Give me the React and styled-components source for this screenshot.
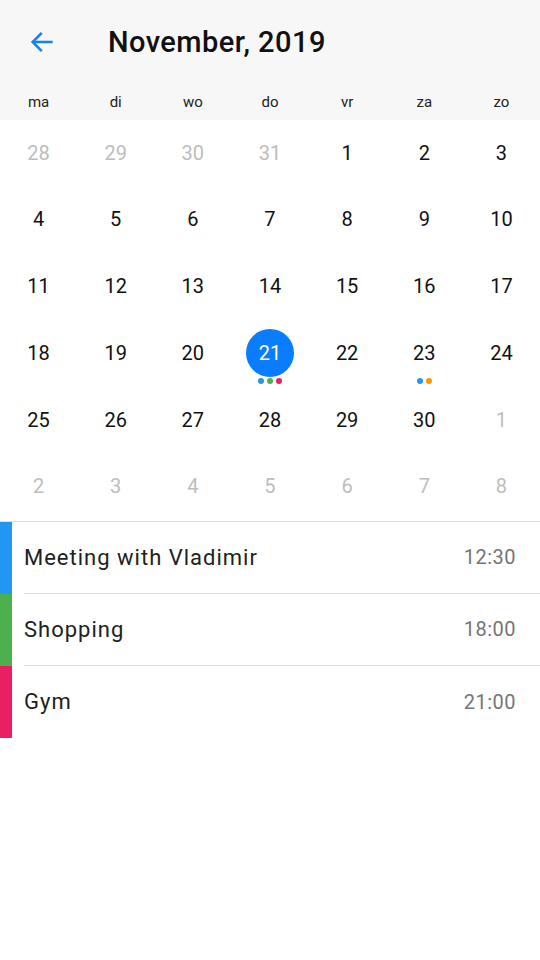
import React from "react";
import styled, { createGlobalStyle } from "styled-components";

const GlobalStyle = createGlobalStyle`
  body {
    margin: 0;
    font-family: Roboto, "Noto Sans", sans-serif;
    background: #fff;
  }
`;

const weekDays = ["ma", "di", "wo", "do", "vr", "za", "zo"];

const days = [
  [28, true], [29, true], [30, true], [31, true], [1], [2], [3],
  [4], [5], [6], [7], [8], [9], [10],
  [11], [12], [13], [14], [15], [16], [17],
  [18], [19], [20], [21], [22], [23], [24],
  [25], [26], [27], [28], [29], [30], [1, true],
  [2, true], [3, true], [4, true], [5, true], [6, true], [7, true], [8, true],
];

const marks = {
  24: ["#2196F3", "#4CAF50", "#E91E63"],
  26: ["#2196F3", "#FF9800"],
};

const events = [
  { title: "Meeting with Vladimir", time: "12:30", color: "#2196F3" },
  { title: "Shopping", time: "18:00", color: "#4CAF50" },
  { title: "Gym", time: "21:00", color: "#E91E63" },
];

export default function App() {
  return (
    <>
      <GlobalStyle />
      <Page>
        <Header>
          <TopBar>
            <BackButton>
              <svg width="28" height="28" viewBox="0 0 24 24" fill="none" stroke="#1a7ff2" strokeWidth="2.2" strokeLinecap="square">
                <path d="M20 12H5" />
                <path d="M11 5l-7 7 7 7" />
              </svg>
            </BackButton>
            <Title>November, 2019</Title>
          </TopBar>
          <WeekRow>
            {weekDays.map((d) => (
              <WeekDay key={d}>{d}</WeekDay>
            ))}
          </WeekRow>
        </Header>
        <Grid>
          {days.map(([n, muted], i) => (
            <Cell key={i}>
              <Day $muted={muted} $selected={i === 24}>{n}</Day>
              <Dots>
                {(marks[i] || []).map((c, j) => (
                  <Dot key={j} $color={c} />
                ))}
              </Dots>
            </Cell>
          ))}
        </Grid>
        <EventList>
          {events.map((e) => (
            <EventRow key={e.title}>
              <ColorBar $color={e.color} />
              <EventBody>
                <EventTitle>{e.title}</EventTitle>
                <EventTime>{e.time}</EventTime>
              </EventBody>
            </EventRow>
          ))}
        </EventList>
      </Page>
    </>
  );
}

const Page = styled.div`
  width: 540px;
  min-height: 960px;
  background: #fff;
`;

const Header = styled.div`
  background: #f7f7f7;
  height: 120px;
`;

const TopBar = styled.div`
  display: flex;
  align-items: center;
  height: 84px;
`;

const BackButton = styled.div`
  width: 28px;
  height: 28px;
  margin-left: 28px;
  margin-right: 52px;
  display: flex;
`;

const Title = styled.h1`
  margin: 0;
  font-size: 29px;
  font-weight: 500;
  color: #111;
  letter-spacing: 0.45px;
`;

const WeekRow = styled.div`
  display: grid;
  grid-template-columns: repeat(7, 1fr);
  height: 36px;
  align-items: center;
`;

const WeekDay = styled.div`
  text-align: center;
  font-size: 15px;
  color: #222;
`;

const Grid = styled.div`
  display: grid;
  grid-template-columns: repeat(7, 1fr);
  grid-auto-rows: 66.8px;
  border-bottom: 1px solid #e0e0e0;
`;

const Cell = styled.div`
  display: flex;
  flex-direction: column;
  align-items: center;
  padding-top: 8.5px;
`;

const Day = styled.div`
  width: 48px;
  height: 48px;
  border-radius: 50%;
  display: flex;
  align-items: center;
  justify-content: center;
  font-size: 20px;
  color: ${(p) => (p.$selected ? "#fff" : p.$muted ? "#bdbdbd" : "#111")};
  background: ${(p) => (p.$selected ? "#0a7cff" : "transparent")};
`;

const Dots = styled.div`
  display: flex;
  gap: 3px;
  margin-top: 1.5px;
`;

const Dot = styled.span`
  width: 6px;
  height: 6px;
  border-radius: 50%;
  background: ${(p) => p.$color};
`;

const EventList = styled.div`
  display: flex;
  flex-direction: column;
`;

const EventRow = styled.div`
  display: flex;
  height: 72px;
`;

const ColorBar = styled.div`
  width: 12px;
  background: ${(p) => p.$color};
`;

const EventBody = styled.div`
  flex: 1;
  display: flex;
  align-items: center;
  justify-content: space-between;
  margin-left: 12px;
  padding-right: 24px;
  ${EventRow}:not(:last-child) & {
    border-bottom: 1px solid #e0e0e0;
  }
`;

const EventTitle = styled.div`
  font-size: 22px;
  letter-spacing: 1px;
  color: #212121;
`;

const EventTime = styled.div`
  font-size: 20px;
  letter-spacing: 0.5px;
  color: #757575;
`;
